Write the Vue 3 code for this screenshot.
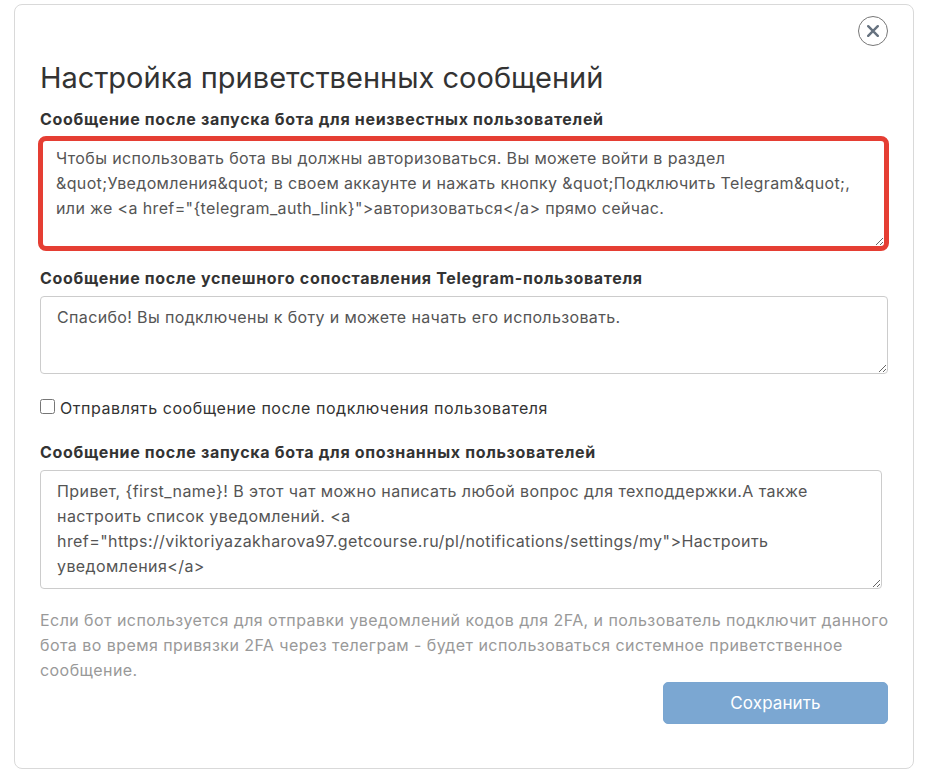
<script setup>
const t1 = 'Чтобы использовать бота вы должны авторизоваться. Вы можете войти в раздел &quot;Уведомления&quot; в своем аккаунте и нажать кнопку &quot;Подключить Telegram&quot;, или же <a href="{telegram_auth_link}">авторизоваться</a> прямо сейчас.'
const t2 = 'Спасибо! Вы подключены к боту и можете начать его использовать.'
const t3 = 'Привет, {first_name}! В этот чат можно написать любой вопрос для техподдержки.А также настроить список уведомлений. <a href="https://viktoriyazakharova97.getcourse.ru/pl/notifications/settings/my">Настроить уведомления</a>'
</script>

<template>
  <div class="page">
    <div class="modal">
      <div class="close-row">
        <button class="close" type="button" aria-label="Закрыть">
          <svg width="12" height="12" viewBox="0 0 12 12"><path d="M1.2 1.2l9.6 9.6M10.8 1.2l-9.6 9.6" stroke="#66727f" stroke-width="2.4" stroke-linecap="round" fill="none"/></svg>
        </button>
      </div>
      <h1 class="title">Настройка приветственных сообщений</h1>
      <label class="lbl l1">Сообщение после запуска бота для неизвестных пользователей</label>
      <textarea class="ta ta1" :value="t1"></textarea>
      <label class="lbl l2">Сообщение после успешного сопоставления Telegram-пользователя</label>
      <textarea class="ta ta2" :value="t2"></textarea>
      <label class="check"><input type="checkbox" />Отправлять сообщение после подключения пользователя</label>
      <label class="lbl l3">Сообщение после запуска бота для опознанных пользователей</label>
      <textarea class="ta ta3" :value="t3"></textarea>
      <p class="hint">Если бот используется для отправки уведомлений кодов для 2FA, и пользователь подключит данного бота во время привязки 2FA через телеграм - будет использоваться системное приветственное сообщение.</p>
      <div class="actions"><button class="save" type="button">Сохранить</button></div>
    </div>
  </div>
</template>

<style scoped>
.page { width: 926px; height: 777px; box-sizing: border-box; padding: 4px 12px 8px 14px; background: #fff; font-family: Inter, "Noto Sans", sans-serif; color: #333; }
.modal { box-sizing: border-box; height: 765px; border: 1px solid #d9d9d9; border-radius: 8px; padding: 11px 25px 0 25px; display: flex; flex-direction: column; align-items: flex-start; }
.close-row { align-self: stretch; display: flex; justify-content: flex-end; height: 31px; }
.close { width: 30px; height: 30px; padding: 0; border: 1px solid #777; border-radius: 50%; background: #fff; display: flex; align-items: center; justify-content: center; }
.title { margin: 11px 0 0; font-size: 29px; line-height: 40px; font-weight: 400; color: #333; }
.lbl { font-size: 16px; line-height: 24px; font-weight: 700; color: #333; letter-spacing: .68px; }
.l1 { margin-top: 9px; }
.ta { display: block; box-sizing: border-box; width: 848px; margin-top: 6px; padding: 8px 16px 6px; font-family: inherit; font-size: 16px; letter-spacing: .36px; line-height: 25px; color: #555; border: 1px solid #ccc; border-radius: 4px; background: #fff; outline: none; }
.ta1 { width: 851px; height: 115px; border: 5px solid #e53e33; border-radius: 8px; padding: 5px 13px 4px; margin: 5px 0 0 -2px; }
.l2 { margin-top: 15px; }
.ta2 { height: 78px; }
.check { display: flex; align-items: center; margin-top: 22px; font-size: 16px; line-height: 24px; letter-spacing: .56px; color: #333; }
.check input { margin: -4px 5px 0 0; width: 15px; height: 15px; }
.l3 { margin-top: 20px; }
.ta3 { height: 119px; width: 842px; letter-spacing: .42px; }
.hint { margin: 19px 0 0; width: 858px; font-size: 16px; line-height: 25px; letter-spacing: .44px; color: #999; }
.actions { align-self: stretch; display: flex; justify-content: flex-end; margin-top: -1px; }
.save { width: 225px; height: 42px; border: 1px solid #7aa6d1; border-radius: 5px; background: #7ba7d2; color: #fff; font-family: inherit; font-size: 17px; letter-spacing: .1px; }
</style>
